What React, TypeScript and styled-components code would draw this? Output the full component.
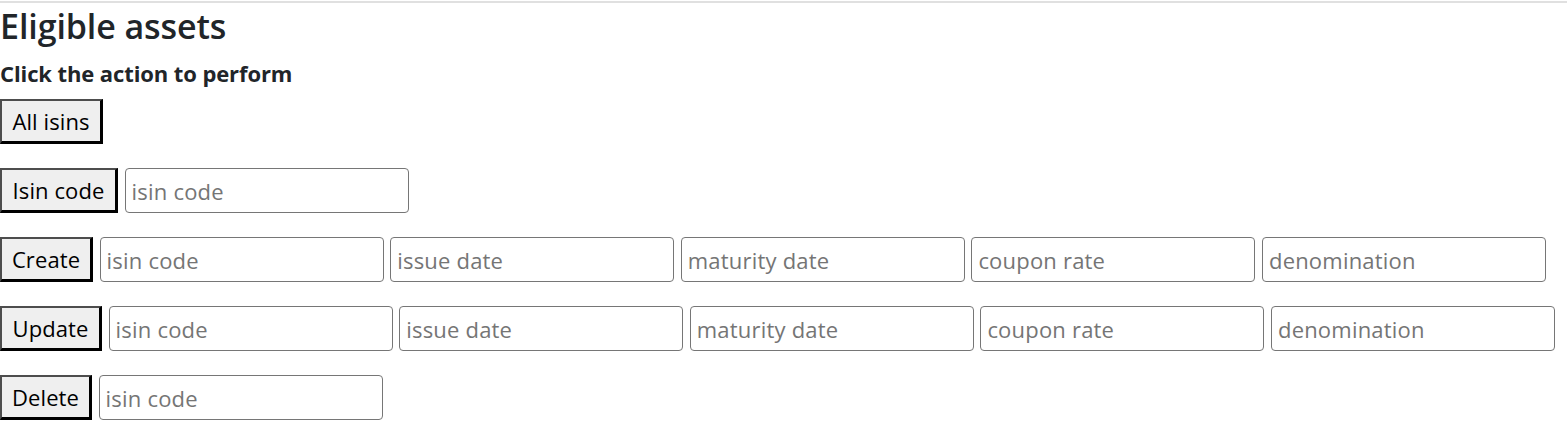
import React from "react";
import styled, { createGlobalStyle } from "styled-components";

const Global = createGlobalStyle`
  html, body { margin: 0; padding: 0; background: #ffffff; }
  body { font-family: "Open Sans", "Noto Sans", sans-serif; color: #212529; }
`;

const Page = styled.div`
  display: flex;
  flex-direction: column;
  border-top: 2px solid #e0e0e0;
  margin-top: 1px;
`;

const Title = styled.h1`
  margin: 0;
  font-size: 34px;
  font-weight: 600;
  line-height: 46px;
  letter-spacing: -0.1px;
  color: #212529;
`;

const Subtitle = styled.h3`
  margin: 0;
  font-size: 22px;
  font-weight: 700;
  line-height: 48px;
  letter-spacing: -0.1px;
  color: #212529;
`;

const Actions = styled.div`
  display: flex;
  flex-direction: column;
  gap: 24px;
  margin-top: 2px;
`;

const Row = styled.div`
  display: flex;
  align-items: center;
  gap: 6.6px;
  height: 45px;
`;

const ActionButton = styled.button<{ $w: number }>`
  box-sizing: border-box;
  width: ${(p) => p.$w}px;
  height: 45px;
  padding: 0;
  background: #efefef;
  border-style: solid;
  border-width: 2px 3px 3px 2px;
  border-color: #4d4d4d #000000 #000000 #4d4d4d;
  font-family: "Open Sans", "Noto Sans", sans-serif;
  font-size: 22px;
  letter-spacing: 0.1px;
  color: #000000;
  text-align: center;
  cursor: pointer;
`;

const Field = styled.input`
  box-sizing: border-box;
  width: 284px;
  height: 45px;
  padding: 0 6px;
  border: 1px solid #767676;
  border-radius: 4px;
  background: #ffffff;
  font-family: "Open Sans", "Noto Sans", sans-serif;
  font-size: 22px;
  letter-spacing: 0.2px;
  color: #212529;
  &::placeholder { color: #757575; }
`;

const assetFields = ["isin code", "issue date", "maturity date", "coupon rate", "denomination"];

export default function App() {
  return (
    <>
      <Global />
      <Page>
        <Title>Eligible assets</Title>
        <Subtitle>Click the action to perform</Subtitle>
        <Actions>
          <Row>
            <ActionButton $w={103}>All isins</ActionButton>
          </Row>
          <Row>
            <ActionButton $w={118}>Isin code</ActionButton>
            <Field placeholder="isin code" />
          </Row>
          <Row>
            <ActionButton $w={93}>Create</ActionButton>
            {assetFields.map((f) => (
              <Field key={f} placeholder={f} />
            ))}
          </Row>
          <Row>
            <ActionButton $w={102}>Update</ActionButton>
            {assetFields.map((f) => (
              <Field key={f} placeholder={f} />
            ))}
          </Row>
          <Row>
            <ActionButton $w={92}>Delete</ActionButton>
            <Field placeholder="isin code" />
          </Row>
        </Actions>
      </Page>
    </>
  );
}
